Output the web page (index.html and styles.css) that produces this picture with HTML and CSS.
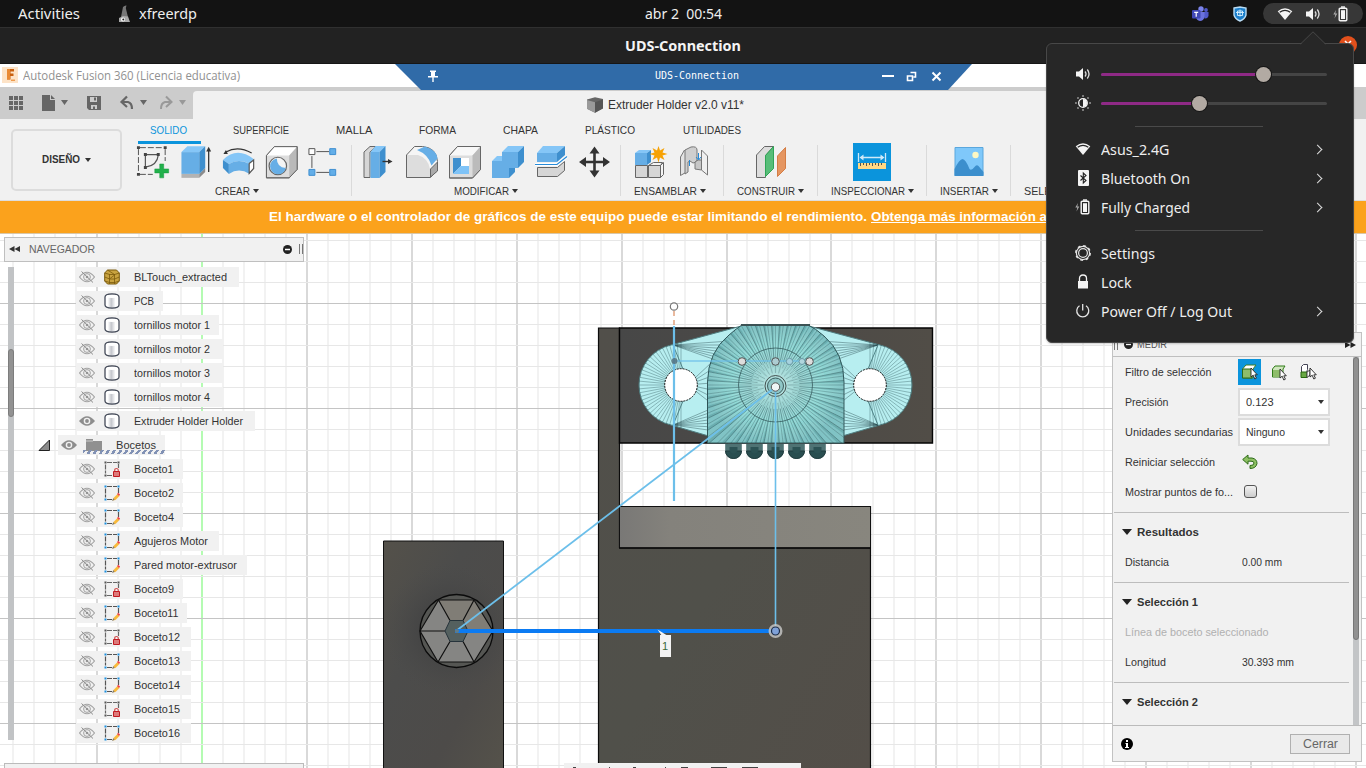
FILE: index.html
```html
<!DOCTYPE html>
<html lang="es">
<head>
<meta charset="utf-8">
<title>UDS-Connection</title>
<link rel="stylesheet" href="styles.css">
</head>
<body>
<svg class="defs" aria-hidden="true">
  <defs>
    <symbol id="wifi" viewBox="0 0 16 16"><path d="M.7 5.200Q8-.800 15.300 5.200L8 14z" fill="#f4f4f4"/><path d="M2.700 6.200Q8 2.400 13.300 6.200" fill="none" stroke="#272727" stroke-width="1.200"/></symbol>
    <symbol id="vol" viewBox="0 0 16 16"><path d="M1 5.500h3L8 2v12L4 10.500H1z" fill="#f4f4f4"/><path d="M10 5.500q2 2.500 0 5M12.300 3.500q3.500 4.500 0 9" fill="none" stroke="#ddd" stroke-width="1.300"/></symbol>
    <symbol id="batt" viewBox="0 0 16 16"><path d="M3 4L.300 8.500h2L1.500 12.500 4.300 7.500h-2z" fill="#aaa"/><path d="M8 .300h4v1.500H8z" fill="#f4f4f4"/><rect x="6.200" y="2.200" width="7.600" height="12.600" rx="1" fill="none" stroke="#f4f4f4" stroke-width="1.400"/><rect x="8" y="4.200" width="4" height="8.800" fill="#f4f4f4"/></symbol>
    <symbol id="eye" viewBox="0 0 16 12"><path d="M0 6Q8-3.500 16 6 8 15.500 0 6z" fill="#8d8d8d"/><circle cx="8" cy="6" r="3.300" fill="#f1f1f1"/><circle cx="8" cy="6" r="1.900" fill="#8d8d8d"/></symbol>
    <symbol id="eyeoff" viewBox="0 0 16 12"><path d="M.5 6Q8-3.500 15.500 6 8 15.500.5 6z" fill="none" stroke="#a2a2a2" stroke-width="1.200"/><circle cx="8" cy="6" r="3.400" fill="none" stroke="#a2a2a2"/><circle cx="8" cy="6" r="1.300" fill="#999"/><path d="M2.500.500l11.500 11" stroke="#8e8e8e"/></symbol>
    <linearGradient id="cyl"><stop offset=".2" stop-color="#fff"/><stop offset=".45" stop-color="#c4c6cc"/><stop offset=".75" stop-color="#fff"/></linearGradient>
    <symbol id="body" viewBox="0 0 16 16"><path d="M1 4Q1 1 8 .800 15 1 15 4V12Q15 15 8 15.200 1 15 1 12z" fill="url(#cyl)" stroke="#454b59" stroke-width="1.300"/><path d="M2 3.800Q2 2 8 1.800 14 2 14 3.800 12 5 8 5 4 5 2 3.800z" fill="#fff"/></symbol>
    <symbol id="mesh" viewBox="0 0 16 16"><path d="M.700 4L3.500 1h9l2.800 3v8l-2.800 3h-9L.700 12z" fill="#c9a340" stroke="#7b5b0d"/><path d="M.700 4l5 1.500h5L15.300 4M.700 8l5 2h5l4.600-2M.700 12l5 1.500h5l4.600-1.500M5.500 5v10M10.500 5v10M3.500 1l7 4.500M5.500 10l5-4" fill="none" stroke="#7b5b0d" stroke-width=".8"/></symbol>
    <symbol id="skpen" viewBox="0 0 16 16"><path d="M3 1.500h10M1.500 3.500v9M14.500 3v5M3 14.500h5" fill="none" stroke="#555" stroke-width="1.200" stroke-dasharray="5 1"/><path d="M.500.500h2v2h-2zM13.500.500h2v2h-2zM.500 13.500h2v2h-2z" fill="#1a8fe0"/><path d="M8.500 15.500l1-2.500 4-4 2 2-4 4z" fill="#f8ba3c"/><path d="M13 9l1.200-1.200L16.200 9.600 15 11z" fill="#f0434a"/><path d="M8 16l1.200-2.800 1.500 1.500z" fill="#777"/></symbol>
    <symbol id="sklock" viewBox="0 0 16 16"><path d="M3 1.500h10M1.500 3.500v9M14.500 3v4M3 14.500h5" fill="none" stroke="#666" stroke-width="1.200" stroke-dasharray="5 1"/><path d="M.500.500h2v2h-2zM13.500.500h2v2h-2zM.500 13.500h2v2h-2z" fill="#555"/><path d="M10.700 11V9.500q0-2 1.800-2t1.800 2V11" fill="none" stroke="#d05050" stroke-width="1.200"/><path d="M9.500 10.500h6v5h-6z" fill="#dd7a7a" stroke="#c11a22"/></symbol>
    <symbol id="cursor" viewBox="0 0 8 13"><path d="M1 1v9l2.200-1.800 1.600 3.800 1.600-.8L4.800 7.800h2.500z" fill="#fff" stroke="#222" stroke-width=".9"/></symbol>
  </defs>
</svg>

<header class="topbar">
  <span class="activities fit" data-w="62">Activities</span>
  <svg class="appicon" width="14" height="18" viewBox="0 0 14 18"><path d="M5 2q2-2 3.500-1.500Q7 3 8.500 6l1.500 6H3l1-5z" fill="#777"/><path d="M1 13l4-2 5 .500 2 5.500H1z" fill="#a9a9a9"/><circle cx="5" cy="14.500" r="2" fill="#fff"/><circle cx="5.300" cy="14.500" r="1" fill="#222"/></svg>
  <span class="appname fit" data-w="58">xfreerdp</span>
  <span class="clock fit" data-w="77">abr 2&nbsp; 00:54</span>
  <div class="tray">
    <svg width="17" height="16" viewBox="0 0 17 16"><circle cx="9" cy="3" r="2.700" fill="#7b83eb"/><circle cx="14" cy="4" r="1.900" fill="#5059c9"/><path d="M11 6h5.500v4q-1 3-4 2.500z" fill="#5059c9"/><path d="M4 6h8.500v5q-1 4-4.500 4-3.500-.5-4-4z" fill="#6a72dd"/><rect y="4" width="8.500" height="8.500" rx="1" fill="#4048b5"/><path d="M2.200 6.300h4M4.200 6.300v4.500" stroke="#fff" stroke-width="1.200"/></svg>
    <svg width="14" height="16" viewBox="0 0 14 16"><path d="M1 2l6-1 6 1v7q-1 4-6 6-5-2-6-6z" fill="#1c7fcb" stroke="#b9dcf4" stroke-width="1.400"/><path d="M4.500 5h5v4.500h-5zM3 6.500h8M7 3.500v7" fill="none" stroke="#d8f0ff" stroke-width=".9"/></svg>
    <div class="pill"><svg width="16" height="16"><use href="#wifi"/></svg><svg width="16" height="16"><use href="#vol"/></svg><svg width="16" height="16"><use href="#batt"/></svg></div>
  </div>
</header>

<div class="wintitle"><span class="fit" data-w="116">UDS-Connection</span>
  <svg class="winclose" width="18" height="18" viewBox="0 0 18 18"><circle cx="9" cy="9" r="9" fill="#e2501c"/><path d="M6 5l6 6M12 5l-6 6" stroke="#fff" stroke-width="1.600"/></svg>
</div>

<div class="apptitle">
  <svg width="16" height="16" viewBox="0 0 16 16"><rect width="16" height="16" fill="#fde3c7"/><path d="M5 2h7v2.500H8.500v2h3v2.500h-3v3.500H5z" fill="#c9600f"/><path d="M5 2h3v10.500H5z" fill="#e98a35"/><path d="M9 12.500h4V14H9z" fill="#ef9c4e"/></svg>
  <span class="fit" data-w="217">Autodesk Fusion 360 (Licencia educativa)</span>
  <div class="rdpbar">
    <svg class="pin" width="12" height="12" viewBox="0 0 12 12"><path d="M3 .500h6v1.500H8V6h3v1.500H6.700V12H5.300V7.500H1V6h3V2H3z" fill="#fff"/></svg>
    <span class="rdpname fit" data-w="84">UDS-Connection</span>
    <svg class="rdpctl" width="60" height="12" viewBox="882 70 60 12"><path d="M882 76h12" stroke="#fff" stroke-width="2"/><path d="M910.500 72.500h5v4.500h-2M907.500 76h5v4.500h-5z" fill="none" stroke="#fff" stroke-width="1.600"/><path d="M932.500 72.500l8 8M940.500 72.500l-8 8" stroke="#fff" stroke-width="2"/></svg>
  </div>
</div>

<div class="quick">
  <svg width="193" height="32" viewBox="0 87 193 32"><g fill="#666"><path d="M9 96h4v4H9zM14 96h4v4h-4zM19 96h4v4h-4zM9 101h4v4H9zM14 101h4v4h-4zM19 101h4v4h-4zM9 106h4v4H9zM14 106h4v4h-4zM19 106h4v4h-4z"/><path d="M42 95h8v5h5v11H42zM51 95l4 4h-4z"/><path d="M61 100h7l-3.500 5zM140 100h7l-3.500 5z"/><path d="M87 96h14v14H89l-2-2z"/></g><path d="M90 97h7v5h-7zM91 105h6v4h-6z" fill="#ccc"/><path d="M94 97.500h2v3h-2zM93 106.500h2v3h-2z" fill="#666"/><path d="M122 102h6q4 1 4 7" fill="none" stroke="#666" stroke-width="2.200"/><path d="M127 96.500l-5.500 5.500 5.500 5" fill="none" stroke="#666" stroke-width="2.200"/><path d="M171 102h-6q-4 1-4 7" fill="none" stroke="#999" stroke-width="2"/><path d="M166 96.500l5.500 5.500-5.500 5" fill="none" stroke="#999" stroke-width="2"/><path d="M179 100h7l-3.500 5z" fill="#999"/></svg>
  <div class="doctab"><svg width="16" height="16" viewBox="0 0 16 16"><path d="M0 2.500L8 .300l8 1.700v9l-8 4.700-8-4z" fill="#666"/><path d="M0 3l8 2.200v10.500l-8-4z" fill="#9a9a9a"/><path d="M8 5.200L16 2.500v9l-8 4.200z" fill="#555"/></svg><span class="fit" data-w="136">Extruder Holder v2.0 v11*</span></div>
</div>

<div class="ribbon">
  <button class="workspace"><span class="fit" data-w="38">DISEÑO</span><i class="caret"></i></button>
  <div class="ribbody">
    <nav class="tabs">
      <span class="on"><b class="fit" data-w="37">SOLIDO</b></span><span class="fit" data-w="56">SUPERFICIE</span><span class="fit" data-w="36.5">MALLA</span><span class="fit" data-w="37">FORMA</span><span class="fit" data-w="35">CHAPA</span><span class="fit" data-w="50">PLÁSTICO</span><span class="fit" data-w="58">UTILIDADES</span>
    </nav>
    <div class="groups">
      <section class="g-create">
        <div class="icons">
          <svg viewBox="132 143 43 38"><path d="M140 147.500h24M138.500 149v24M165.500 149v12M140 174.500h13" fill="none" stroke="#555" stroke-dasharray="6 2"/><path d="M145.500 167.500v-13h13M158.500 155q-1 10-12 12" fill="none" stroke="#555" stroke-width="1.200"/><path d="M137 146h3v3h-3zM164 146h3v3h-3zM137 173h3v3h-3zM144 153h3v3h-3zM157 153h3v3h-3zM144 166h3v3h-3z" fill="#444"/><path d="M160 164h4v5h5v4h-5v5h-4v-5h-5v-4h5z" fill="#22b14c" stroke="#159a3c" stroke-width=".5"/></svg>
          <svg viewBox="174.500 143 43 38"><path d="M181 174h18v4h-18z" fill="#b3b3b3"/><path d="M199 174l6-6v4l-6 6z" fill="#8c8c8c"/><path d="M181 152h18v22h-18z" fill="#66aee6"/><path d="M181 152l6-6h18l-6 6z" fill="#85c6f7"/><path d="M199 152l6-6v22l-6 6z" fill="#3e8fce"/><path d="M208.500 172v-23" stroke="#333" stroke-width="1.300"/><path d="M208.500 146.500l2.500 5h-5z" fill="#333"/></svg>
          <svg viewBox="217 143 43 38"><path d="M226 152q12-7 26 1" fill="none" stroke="#333" stroke-width="1.200"/><path d="M223.500 154l2.500-4 2 4z" fill="#333"/><path d="M223 160q14-14 31-1l-4 5q-10-6-21 0z" fill="#85c6f7"/><path d="M223 160l6 4v10l-6-6z" fill="#3e8fce"/><path d="M229 164q10-6 21 0v10q-11-7-21 0z" fill="#66aee6"/><path d="M249.500 163.500l4.500-3.500v8.500l-4.500 5z" fill="#fff" stroke="#555" stroke-width="1.200"/></svg>
          <svg viewBox="260 143 43 38"><path d="M266.500 155.500l8-9h23v23l-8 8.500h-23z" fill="#ddd" stroke="#666"/><path d="M266.500 155.500l8-9h23l-8 9z" fill="#fff"/><path d="M289.500 155.500l8-9v23l-8 8.500z" fill="#b9b9b9"/><path d="M266.500 155.500l8-9h23v23l-8 8.500h-23z" fill="none" stroke="#666"/><circle cx="278" cy="166" r="8.800" fill="#f4f4f4" stroke="#666" stroke-width="1.200"/><path d="M277 158.500q0 9 9 9.500a8 8 0 1 1-9-9.500z" fill="#66aee6"/></svg>
          <svg viewBox="302.500 143 43 38"><path d="M317 151.500h13M312.500 156v12M317 172.500h13" stroke="#555"/><path d="M309.500 148.500h6v6h-6z" fill="#fff" stroke="#555"/><path d="M330.500 148.500h6v6h-6zM309.500 169.500h6v6h-6zM330.500 169.500h6v6h-6z" fill="#63aee8" stroke="#3f8fd0"/></svg>
        </div><h2 class="nudge"><span class="fit" data-w="35">CREAR</span><i class="caret"></i></h2>
      </section>
      <section class="g-modify">
        <div class="icons">
          <svg viewBox="358.500 143 43 38"><path d="M364.500 152l6-5.500h6l-6 5.500v25.500h-6z" fill="#d6d6d6" stroke="#666"/><path d="M371 152h9v26h-9z" fill="#66aee6"/><path d="M371 152l5-6h10l-6 6z" fill="#85c6f7"/><path d="M380 152l6-6v26l-6 6z" fill="#3e8fce"/><path d="M383 161.500h7" stroke="#333" stroke-width="1.400"/><path d="M388.500 159l4.500 2.500-4.500 2.500z" fill="#333"/></svg>
          <svg viewBox="401 143 43 38"><path d="M406.500 155l8-8.500h8q14 1 15 15v9l-7 7h-24z" fill="#f5f5f5" stroke="#666"/><path d="M407 155h11q10 3 12 14v8h-23z" fill="#ddd"/><path d="M430.500 169l7-7v9l-7 6z" fill="#aaa" stroke="#666"/><path d="M417 150l8-3.500q12 4 12.500 12l-6 7q-3-11-14.500-15.500z" fill="#66aee6"/></svg>
          <svg viewBox="444 143 43 38"><path d="M449.500 155.500l8-9h23v23l-8 8.500h-23z" fill="#ddd" stroke="#666"/><path d="M449.500 155.500l8-9h23l-8 9z" fill="#f8f8f8"/><path d="M472.500 155.500l8-9v23l-8 8.500z" fill="#bbb"/><path d="M449.500 155.500l8-9h23v23l-8 8.500h-23z" fill="none" stroke="#666"/><path d="M453 158h16v16h-16z" fill="#fff"/><path d="M453 158h8v8l-8 8z" fill="#3e8fce"/><path d="M453 174l8-8h8v8z" fill="#7fc3f7"/></svg>
          <svg viewBox="487 143 43 38"><path d="M502 152h16v16h-9v10h-17v-17h10z" fill="#66aee6"/><path d="M502 152l6-6h16l-6 6zM492 161l5-5h5v5z" fill="#85c6f7"/><path d="M518 152l6-6v16l-6 6h-3v4l-6 6v-10h9z" fill="#3e8fce"/></svg>
          <svg viewBox="530 143 43 38"><path d="M537 153h20v9h-20z" fill="#66aee6"/><path d="M537 153l6-7h22l-8 7z" fill="#85c6f7"/><path d="M557 153l8-7v9l-8 7z" fill="#3e8fce"/><path d="M537.500 167.500h20l7-6v9l-7 6h-20z" fill="#d6d6d6" stroke="#666"/><path d="M535 164.500h22l10-8" fill="none" stroke="#fff" stroke-width="3"/><path d="M535 164.500h22l10-8" fill="none" stroke="#278bd8" stroke-width="1.200"/></svg>
          <svg viewBox="572.500 143 43 38"><path d="M594 151v22M583 162h22" stroke="#333" stroke-width="2.600"/><path d="M594 146.500l5 7h-10zM594 177.500l5-7h-10zM578.500 162l7-5v10zM609.500 162l-7-5v10z" fill="#333"/></svg>
        </div><h2><span class="fit" data-w="55">MODIFICAR</span><i class="caret"></i></h2>
      </section>
      <section class="g-assemble">
        <div class="icons">
          <svg viewBox="630 143 43 38"><path d="M635.500 165.500h12v12h-12zM648.500 165.500h12v12h-12z" fill="#d6d6d6" stroke="#666"/><path d="M648.500 165.500l5-3h9l-2 3zM660.500 165.500l3-3v12l-3 3z" fill="#f5f5f5" stroke="#666"/><path d="M635 153h12v12h-12z" fill="#66aee6"/><path d="M635 153l4-3h12l-4 3z" fill="#85c6f7"/><path d="M647 153l4-3v12l-4 3z" fill="#3e8fce"/><path d="M658.500 146l1.500 4.500 4.500-2.500-2 4.500 5 1.500-5 1.500 2 4.500-4.500-2.500-1.500 5-1.500-5-4.500 2.500 2-4.500-5-1.500 5-1.500-2-4.500 4.500 2.500z" fill="#f7a204"/></svg>
          <svg viewBox="673 143 43 38"><path d="M680.500 157l4-7 2 2v20l-6 3.500z" fill="#e4e4e4" stroke="#777"/><path d="M685 150l6-3q6-1 6 3v10q-1 3-4 3l-3-2-2 1v10l-3 2z" fill="#cfcfcf" stroke="#777"/><path d="M701.500 150l6 6v19l-6-5z" fill="#f0f0f0" stroke="#777"/><path d="M695 162q3-3 6.500-2v10l-6.500-1z" fill="#c6c6c6" stroke="#777"/><path d="M689.500 160v6M698.500 153v6" stroke="#278bd8"/><path d="M696 157l2.500 3 2.500-3" fill="none" stroke="#278bd8"/></svg>
        </div><h2><span class="fit" data-w="63">ENSAMBLAR</span><i class="caret"></i></h2>
      </section>
      <section class="g-construct"><div class="icons"><svg viewBox="750 143 43 38"><path d="M756.500 155l8-8.500h9l-8 9v22h-9z" fill="#ddd" stroke="#666"/><path d="M765.500 155.500l8-9v22l-8 8z" fill="#57bd78" stroke="#2fa556"/><path d="M777.500 156l8-8.500v21l-8 8z" fill="#e59661" stroke="#d47d45"/></svg></div><h2 class="nudge"><span class="fit" data-w="58">CONSTRUIR</span><i class="caret"></i></h2></section>
      <section class="g-inspect"><div class="icons"><svg viewBox="851 143 43 38"><path d="M853 143h38v38h-38z" fill="#0b94dc"/><path d="M858.500 153v9M885.500 153v9M861 157.500h22" stroke="#cfe9f8" stroke-width="1.300"/><path d="M859.500 157.500l4-3v6zM884.500 157.500l-4-3v6z" fill="#cfe9f8"/><path d="M858 163h28v6h-28z" fill="#ffd884"/><path d="M860.500 163v3M863.500 163v2M866.500 163v3M869.500 163v2M872.500 163v3M875.500 163v2M878.500 163v3M881.500 163v2" stroke="#555"/></svg></div><h2 class="nudge"><span class="fit" data-w="74">INSPECCIONAR</span><i class="caret"></i></h2></section>
      <section class="g-insert"><div class="icons"><svg viewBox="947.500 143 43 38"><path d="M954.500 147.500h28v28h-28z" fill="#7fc8fa" stroke="#5aa7dd"/><circle cx="975" cy="155" r="3.200" fill="#fdf8c4"/><path d="M954 169q5-10 8-10t7 10q2 2 5-2 2-3 4-1l5 6v4h-29z" fill="#3c8fcd"/></svg></div><h2 class="nudge"><span class="fit" data-w="49">INSERTAR</span><i class="caret"></i></h2></section>
      <section class="g-select"><h2><span class="fit" data-w="77">SELECCIONAR</span></h2></section>
    </div>
  </div>
</div>

<div class="banner"><span class="fit" data-w="598">El hardware o el controlador de gráficos de este equipo puede estar limitando el rendimiento.</span><a class="fit" data-w="176">Obtenga más información a</a></div>

<main class="canvas">
  <svg class="scene" viewBox="0 234 1366 534">
    <defs>
      <linearGradient id="d1" x1="0" y1="0" x2="1" y2="1"><stop offset="0" stop-color="#54514a"/><stop offset=".35" stop-color="#4c4c4b"/><stop offset=".7" stop-color="#4d4b49"/><stop offset="1" stop-color="#55524a"/></linearGradient>
      <radialGradient id="d2"><stop offset=".4" stop-color="#444"/><stop offset="1" stop-color="#4b4b4a" stop-opacity="0"/></radialGradient>
      <linearGradient id="d3" x1="0" y1="0" x2="1" y2="1"><stop offset="0" stop-color="#514f4a"/><stop offset=".5" stop-color="#50504a"/><stop offset="1" stop-color="#534e48"/></linearGradient>
      <linearGradient id="d4"><stop offset="0" stop-color="#474747"/><stop offset="1" stop-color="#514d47"/></linearGradient>
      <linearGradient id="d5"><stop offset="0" stop-color="#797876"/><stop offset=".2" stop-color="#84827c"/><stop offset="1" stop-color="#88867e"/></linearGradient>
      <radialGradient id="teal" cx=".5" cy=".5"><stop offset="0" stop-color="#b5dfdd"/><stop offset=".65" stop-color="#98dcd9"/><stop offset="1" stop-color="#84c4c5"/></radialGradient>
      <clipPath id="bodyclip"><path id="bodyshape" d="M707.500 443V382Q708 352 729 335 737 328 742 325H808Q815 328 824 336 844 353 844 382V443z"/></clipPath>
      <clipPath id="earclip"><path id="ears" d="M745 325L671 345A41 41 0 0 0 671 425L707 435.500H844L880 425A41 41 0 0 0 880 345L805 325z"/></clipPath>
    </defs>
    <g id="grid"></g>
    <path d="M383.500 541h120v230h-120z" fill="url(#d1)" stroke="#111"/>
    <circle cx="450" cy="630" r="67" fill="url(#d2)" clip-path="inset(0 14px 0 0)"/>
    <circle cx="456.500" cy="631" r="36.500" fill="#555653" stroke="#0b0b0b" stroke-width="1.300"/>
    <path d="M420 631l18.500-31H474l19 31-19 31h-36z" fill="#858583"/>
    <path d="M438.500 600H474l-11 20.500h-13zM474 600l19 31h-25l-5-10.500z" fill="#807d76"/>
    <path d="M420 631l18.500-31H474l19 31-19 31h-36zM420 631h25M493 631h-25M438.500 600l11.500 20.500M474 600l-11 20.500M474 662l-11-20.500M438 662l12-20.500" fill="none" stroke="#101010" stroke-width="1.200"/>
    <path d="M445 631l5-10.500h13l5 10.500-5 10.500h-13z" fill="#54605f" stroke="#26333b"/>
    <path d="M598.500 328h21v178h251.500v265h-272.500z" fill="url(#d3)"/>
    <path d="M598.500 771V328h21v220M870.500 506v265" fill="none" stroke="#0c0c0c" stroke-width="1.200"/>
    <path d="M619.500 328H932.500V443H619.500z" fill="url(#d4)" stroke="#050505" stroke-width="1.400"/>
    <path d="M619.500 506.500h251v41.500h-251z" fill="url(#d5)" stroke="#111"/>
    <path d="M619 548h252" stroke="#0a0a0a" stroke-width="1.500"/>
    <use href="#ears" fill="#b7eef0" stroke="#4f7d80"/>
    <g id="earfan" clip-path="url(#earclip)"></g>
    <use href="#bodyshape" fill="url(#teal)" stroke="#34595c"/>
    <g id="bodyfan" clip-path="url(#bodyclip)"></g>
    <path d="M741 325h69" stroke="#3c5254" stroke-width="2"/>
    <g fill="none" stroke="#315558" stroke-opacity=".75"><circle cx="775.500" cy="385" r="37"/><circle cx="775.500" cy="386" r="10.500" stroke="#222"/></g>
    <circle cx="775.500" cy="386" r="8" fill="#8fc6c6" stroke="#3d5d5e"/>
    <circle cx="681" cy="385" r="16.300" fill="#fff" stroke="#111" stroke-dasharray="2 1"/><circle cx="870" cy="385" r="16.300" fill="#fff" stroke="#111" stroke-dasharray="2 1"/>
    <path d="M855 387.500h30" stroke="#e6e6e6"/>
    <g id="pins"></g>
    <g fill="none" stroke="#6cbfea"><path d="M674 326v175" stroke-width="2.200"/><path d="M674 361h136" stroke-width="1.600" opacity=".8"/><path d="M456 631L775.500 387" stroke-width="1.800"/><path d="M775.500 390V631" stroke-width="1.600"/></g>
    <path d="M674 311v5M674 320v5" stroke="#e2a27f" stroke-width="1.500"/><circle cx="674" cy="306.500" r="3.700" fill="#fff" stroke="#777" stroke-width="1.200"/>
    <circle cx="674.500" cy="361" r="3" fill="#536b78" opacity=".8"/>
    <g fill="#ddd" stroke="#555"><circle cx="742" cy="361.500" r="3.800"/><circle cx="775.500" cy="361.500" r="3.800" fill="#adcdd2"/><circle cx="789.500" cy="361.500" r="3.200" fill="#a6d2df" stroke="#6b9aa5"/><circle cx="802" cy="361.500" r="3" fill="#b0d6de" stroke="#6b9aa5"/><circle cx="809.500" cy="361.500" r="3.800"/><circle cx="775.500" cy="387" r="4.200" fill="#eef5f6"/></g>
    <path d="M455 631H775" stroke="#0b7bf3" stroke-width="4"/><circle cx="457" cy="631" r="2" fill="#627b86"/>
    <circle cx="775.500" cy="631" r="7" fill="#c9c9c9" opacity=".8"/><circle cx="775.500" cy="631" r="4" fill="#7fa1d8" stroke="#1b2c48" stroke-width="1.200"/>
    <path d="M657.500 629.500L668 636h-6z" fill="#f3f3f3"/><path d="M660 635h11v22h-11z" fill="#f3f3f3"/>
    <text class="tag" x="662" y="650">1</text>
  </svg>

  <aside class="navigator">
    <div class="navhead"><svg width="12" height="8" viewBox="0 0 12 8"><path d="M5.500 1v6L0 4zM11 1v6L5.500 4z" fill="#333"/></svg><span class="fit" data-w="66">NAVEGADOR</span><svg class="navmin" width="16" height="11" viewBox="0 0 16 11"><circle cx="4.500" cy="5.500" r="4.500" fill="#222"/><path d="M2 5.500h5" stroke="#fff" stroke-width="1.500"/></svg><i class="grip"></i></div>
    <div class="navbody"><div class="track"><i></i></div><ul id="tree"></ul></div>
    <div class="navfoot"></div>
  </aside>

  <div class="viewbar"><svg width="237" height="5" viewBox="564 763 237 5"><path d="M573 767.500h3M609 767.500h1M633 767.500h3M665 767.500h1M681 767.500h7M711 767.500h16M742 767.500h16" stroke="#444"/></svg></div>

  <section class="measure">
    <div class="mhead"><i class="grip"></i><svg width="9" height="9" viewBox="0 0 9 9"><circle cx="4.500" cy="4.500" r="4.500" fill="#222"/><path d="M2 4.500h5" stroke="#fff" stroke-width="1.300"/></svg><span class="fit" data-w="30">MEDIR</span><svg class="ff" width="12" height="8" viewBox="0 0 12 8"><path d="M0 1v6l5.500-3zM5.500 1v6L11 4z" fill="#222"/></svg></div>
    <div class="mbody">
      <div class="mlist">
        <div class="mrow"><label><span class="fit" data-w="86.5">Filtro de selección</span></label><div class="filters">
          <b class="sel"><svg width="18" height="18" viewBox="0 0 18 18"><path d="M1.500 6L5 2h10l-3 4v9H1.500z" fill="#fff" stroke="#3f7e26"/><path d="M1.500 6h9.500v9H1.500z" fill="#8ebd6a" stroke="#2e6b17"/><use href="#cursor" x="9" y="4" width="8" height="13"/></svg></b>
          <b><svg width="18" height="18" viewBox="0 0 18 18"><path d="M2.500 6L5 3h10l-2 3v7l-3 1H2.500z" fill="#cfe6bd" stroke="#2e7b17"/><path d="M3 7h8v7H3z" fill="#8ebd6a"/><use href="#cursor" x="9" y="5" width="8" height="13"/></svg></b>
          <b><svg width="18" height="18" viewBox="0 0 18 18"><path d="M2.500 3.500l2-2h4v5l-1 3h-5z" fill="#fff" stroke="#445"/><path d="M2 9h6v5.500H2z" fill="#6aa845" stroke="#27670f"/><path d="M8 9l3-2v5l-3 2.500z" fill="#fff" stroke="#444"/><use href="#cursor" x="10" y="4" width="8" height="13"/></svg></b></div></div>
        <div class="mrow"><label><span class="fit" data-w="43.5">Precisión</span></label><div class="select"><span class="fit" data-w="27.5">0.123</span><i class="caret"></i></div></div>
        <div class="mrow"><label><span class="fit" data-w="108">Unidades secundarias</span></label><div class="select"><span class="fit" data-w="39">Ninguno</span><i class="caret"></i></div></div>
        <div class="mrow"><label><span class="fit" data-w="90">Reiniciar selección</span></label><svg class="undo" width="16" height="16" viewBox="0 0 16 16"><path d="M.7 5.500L6 1v3h4q5 1 5 5.500-1 5-7 5v-3q4 .3 4-2.500 0-1.800-3-1.800H6v3z" fill="#8dc063" stroke="#2c6a17"/></svg></div>
        <div class="mrow"><label><span class="fit" data-w="108">Mostrar puntos de fo...</span></label><i class="check"></i></div>
        <div class="mrow mh"><i class="tri"></i><span class="fit" data-w="62">Resultados</span></div>
        <div class="mrow"><label><span class="fit" data-w="44">Distancia</span></label><span class="val fit" data-w="40">0.00 mm</span></div>
        <div class="mrow mh"><i class="tri"></i><span class="fit" data-w="61">Selección 1</span></div>
        <div class="mrow dim"><span class="fit" data-w="143.5">Línea de boceto seleccionado</span></div>
        <div class="mrow"><label><span class="fit" data-w="41">Longitud</span></label><span class="val fit" data-w="52">30.393 mm</span></div>
        <div class="mrow mh"><i class="tri"></i><span class="fit" data-w="61">Selección 2</span></div>
      </div>
      <div class="mtrack"><i></i></div>
    </div>
    <div class="mfoot"><svg width="12" height="12" viewBox="0 0 12 12"><circle cx="6" cy="6" r="6" fill="#000"/><path d="M5 2h2v2H5zM4.500 5H7v4h1v1H4V9h1V6h-.5z" fill="#fff"/></svg><button><span class="fit" data-w="35">Cerrar</span></button></div>
  </section>
</main>

<div class="sysmenu">
  <svg class="arrow" width="26" height="14" viewBox="0 0 26 14"><path d="M0 14L13 1l13 13z" fill="#272727"/><path d="M.5 13L13 .800 25.500 13" fill="none" stroke="#484848"/></svg>
  <div class="srow"><svg width="16" height="16"><use href="#vol"/></svg><div class="slider"><i style="width:162px"></i></div></div>
  <div class="srow"><svg width="16" height="16" viewBox="0 0 16 16"><circle cx="8" cy="8" r="4.300" fill="none" stroke="#f4f4f4" stroke-width="1.300"/><path d="M8 4v8a4 4 0 0 0 0-8z" fill="#f4f4f4"/><path d="M8 .200v1.500M8 14.300v1.500M.2 8h1.500M14.300 8h1.500M2.500 2.500l1 1M12.500 12.500l1 1M2.500 13.500l1-1M12.500 3.500l1-1" stroke="#bbb" stroke-width="1.500"/></svg><div class="slider"><i style="width:98px"></i></div></div>
  <hr>
  <div class="item"><svg width="16" height="16"><use href="#wifi"/></svg><span class="fit" data-w="68.5">Asus_2.4G</span><i class="chev"></i></div>
  <div class="item"><svg width="16" height="16" viewBox="0 0 16 16"><rect x="3" width="11" height="16" rx="1" fill="#f4f4f4"/><path d="M5.500 5.500l5.500 5L8.300 13V3L11 5.500l-5.500 5" fill="none" stroke="#222" stroke-width="1.100"/></svg><span class="fit" data-w="89">Bluetooth On</span><i class="chev"></i></div>
  <div class="item"><svg width="16" height="16"><use href="#batt"/></svg><span class="fit" data-w="89">Fully Charged</span><i class="chev"></i></div>
  <hr>
  <div class="item"><svg width="16" height="16" viewBox="0 0 16 16"><circle cx="8" cy="8" r="6.600" fill="none" stroke="#e4e4e4" stroke-width="1.200"/><circle cx="8" cy="8" r="7.200" fill="none" stroke="#e4e4e4" stroke-width="1.500" stroke-dasharray="2.800 2.850"/><circle cx="8" cy="8" r="4.400" fill="none" stroke="#e4e4e4" stroke-width="1.200"/></svg><span class="fit" data-w="54">Settings</span></div>
  <div class="item"><svg width="16" height="16" viewBox="0 0 16 16"><path d="M3 7h10v7.500H3z" fill="#f4f4f4"/><path d="M4.500 7.500V4.500Q4.500 1 8 1t3.500 3.500v3" fill="none" stroke="#f4f4f4" stroke-width="1.300"/></svg><span class="fit" data-w="30.5">Lock</span></div>
  <div class="item"><svg width="16" height="16" viewBox="0 0 16 16"><path d="M4.500 2.800a6 6 0 1 0 6.500 0M7.700 1V7.500" fill="none" stroke="#e4e4e4" stroke-width="1.300"/></svg><span class="fit" data-w="131">Power Off / Log Out</span><i class="chev"></i></div>
</div>
<script src="main.js"></script>
</body>
</html>
```

FILE: styles.css
```css
* { box-sizing: border-box; }
html, body { margin: 0; width: 1366px; height: 768px; overflow: hidden; }
body { display: flex; flex-direction: column; position: relative; background: #fff; font: 11px/14px "Liberation Sans", sans-serif; color: #333; }
svg { display: block; flex: none; }
i { font-style: normal; display: block; flex: none; }
h2 { margin: 0; font-weight: 400; font-size: 11px; }
button { font: inherit; color: inherit; padding: 0; }
.defs { position: absolute; width: 0; height: 0; }
.fit { display: block; flex: none; white-space: nowrap; font-weight: inherit; }
.fit > span { display: inline-block; transform-origin: 0 50%; }

.topbar { height: 27px; background: #131313; color: #eee; font: 14.500px/27px "Noto Sans", sans-serif; display: flex; align-items: center; padding-left: 18px; flex: none; }
.appicon { margin-left: 38px; }
.appname { margin-left: 7px; }
.clock { margin-left: 448px; }
.topbar .clock { margin-top: -1px; }
.tray { display: flex; align-items: center; margin-left: auto; padding-right: 3px; }
.tray > svg + svg { margin-left: 24px; }
.pill { width: 100px; height: 21px; border-radius: 11px; background: #373737; margin-left: 16px; display: flex; align-items: center; gap: 12px; padding-left: 14px; }

.wintitle { height: 37px; flex: none; background: #222; border-top: 1px solid #303030; border-bottom: 1px solid #161616; color: #f4f4f4; font: bold 14px/36px "Noto Sans", sans-serif; display: flex; padding-left: 625px; }
.winclose { margin: 8px 9px 0 auto; }

.apptitle { height: 23px; flex: none; background: #fff; display: flex; padding-left: 2px; color: #919191; font: 12px/23px "Open Sans", sans-serif; }
.apptitle > svg { margin: 3px 5px 0 0; }
.rdpbar { position: absolute; left: 395px; top: 64px; width: 577px; height: 26px; z-index: 2; background: #306ba8; clip-path: polygon(0 0, 100% 0, 553px 100%, 26px 100%); display: flex; align-items: center; color: #fff; font: 10.500px/22px "DejaVu Sans Mono", monospace; }
.pin { margin: -2px 0 0 32px; }
.rdpname { margin: -4px 0 0 216px; }
.rdpctl { margin: -2px 0 0 143px; }

.quick { height: 32px; flex: none; background: #ccc; display: flex; }
.doctab { width: 1130px; margin-top: 4px; height: 28px; border-radius: 4px 4px 0 0; background: #f1f1f1; display: flex; align-items: center; gap: 5px; padding-left: 394px; font-size: 12px; }

.ribbon { height: 82px; flex: none; background: #f1f1f1; border-bottom: 1px solid #ddd; display: flex; }
.workspace { width: 111px; height: 62px; margin: 10px 0 0 11px; border: 2px solid #dcdcdc; border-radius: 5px; background: #f1f1f1; font-weight: bold; display: flex; align-items: center; padding-left: 29px; gap: 5px; }
.workspace .fit { margin-top: -2px; }
.caret { width: 0; height: 0; border: 3px solid transparent; border-top: 4px solid #333; border-bottom: 0; }
.ribbody { flex: 1; }
.tabs { display: flex; gap: 46.800px; height: 24px; padding: 4px 0 0 28px; }
.tabs > .fit:nth-child(2) { margin-left: -.800px; }
.tabs > .fit:nth-child(n+6) { margin-left: .800px; }
.tabs .on { color: #0b94dc; font-weight: 400; border-bottom: 3px solid #0b94dc; margin: 0 -14px 0 -12px; padding: 0 14px 0 12px; height: 21px; }
.groups { display: flex; height: 57px; }
.groups section { flex: none; display: flex; flex-direction: column; position: relative; }
.groups section + section::before { content: ""; position: absolute; left: 0; top: 2px; width: 1px; height: 51px; background: #dadada; }
.icons { display: flex; justify-content: center; height: 38px; padding-left: 2px; }
.icons svg { width: 43px; height: 38px; }
.groups h2 { display: flex; align-items: center; justify-content: center; gap: 3px; margin-top: 3px; height: 14px; }
.groups .nudge { padding-left: 1px; }
.g-create { width: 229px; } .g-modify { width: 269px; } .g-assemble { width: 103px; }
.g-construct { width: 94px; } .g-inspect { width: 109px; } .g-insert { width: 84px; } .g-select { width: 105px; }
.groups .g-select h2 { margin-top: 41px; }
.g-create .icons { padding-left: 4px; }
.g-create .icons svg { width: 42.600px; }
.groups .g-assemble h2 { padding-right: 3px; }

.banner { height: 33px; flex: none; background: #fba21c; border-bottom: 1px solid #d9c7a8; color: #fff; font: bold 13px/31px "Liberation Sans", sans-serif; display: flex; gap: 4px; padding-left: 269px; overflow: hidden; }
.banner a > span { text-decoration: underline; }

.canvas { flex: 1; position: relative; overflow: hidden; }
.scene { width: 1366px; height: 534px; }
.tag { font: 11px "Liberation Sans", sans-serif; fill: #3a6a3a; }
.navigator { position: absolute; left: 4px; top: 3px; width: 300px; height: 531px; display: flex; flex-direction: column; }
.navhead { height: 25px; flex: none; border: 1px solid #bfbfbf; background: #f1f1f1; display: flex; align-items: center; padding: 0 1px 1px 4px; color: #666; }
.navhead > .fit { margin: -1px 0 0 8px; }
.navmin { margin-left: auto; }
.grip { width: 4px; height: 10px; border: solid #777; border-width: 0 1px; }
.navhead .grip { margin-right: -1px; }
.navbody { display: flex; flex: 1; padding: 5px 0 0 4px; }
.track { width: 6px; height: 473px; background: #c1c3c5; padding-top: 82px; flex: none; }
.track i { height: 68px; border-radius: 3px; background: #929292; border: 1px solid #7d7d7d; }
#tree { margin: 0 0 0 24px; padding: 0; list-style: none; }
#tree li { display: flex; align-items: center; height: 20px; margin-bottom: 4px; }
#tree .cell { display: flex; align-items: center; height: 20px; background: #f1f1f1; margin-left: 38px; padding-left: 3px; }
#tree .ico { margin: 0 14px 0 9px; }
#tree .folder .cell { margin-left: 8px; position: relative; }
#tree .folder .cell::after { content: ""; position: absolute; left: 25px; right: 0; bottom: 1px; height: 4px; background: repeating-linear-gradient(125deg, #8292b5 0 2.400px, transparent 2.400px 5px); }
.navfoot { height: 5px; background: #f1f1f1; border: 1px solid #bbb; border-bottom: 0; }
.viewbar { position: absolute; left: 564px; top: 529px; width: 237px; height: 5px; background: #f1f1f1; }

.measure { position: absolute; left: 1112px; top: 98px; width: 250px; height: 430px; background: #f1f1f1; border: 1px solid #c2c2c2; display: flex; flex-direction: column; }
.mhead { height: 24px; flex: none; border-bottom: 1px solid #bfbfbf; display: flex; align-items: center; color: #555; padding: 0 4px 0 1px; }
.mhead svg { margin: 0 4px 0 6px; }
.mhead > .fit { margin-top: -1px; }
.mhead .ff { margin: 0 0 0 auto; }
.mbody { flex: 1; display: flex; justify-content: space-between; overflow: hidden; }
.mlist { width: 240px; }
.mrow { height: 30px; display: flex; align-items: center; padding-left: 12px; }
.mrow label { width: 113px; flex: none; }
.mrow.mh { height: 35px; border-top: 1px solid #bdbdbd; font-weight: bold; padding: 3px 0 0 9px; margin: 5px 4px 0 1px; }
.tri { border: 5px solid transparent; border-top: 6px solid #222; border-bottom: 0; margin-right: 5px; margin-left: -1px; }
.dim { color: #b0b0b0; }
.val { margin-left: 4px; }
.filters { display: flex; align-items: center; gap: 6px; }
.filters b { width: 23px; height: 26px; display: flex; align-items: center; justify-content: center; }
.filters .sel { background: #0b94dc; }
.select { width: 92px; height: 28px; border: 2px solid #dcdcdc; background: #fff; display: flex; align-items: center; justify-content: space-between; padding: 0 4px 0 6px; }
.undo { margin-left: 4px; }
.check { width: 13px; height: 13px; border: 1px solid #555; border-radius: 3px; background: linear-gradient(#f2f2f2, #ccc); margin: -2px 0 0 6px; }
.mtrack { width: 6px; background: #c3c5c7; margin-right: 2px; }
.mtrack i { height: 283px; background: #919191; border: 1px solid #777; border-radius: 3px; }
.mfoot { height: 36px; flex: none; border-top: 1px solid #bbb; display: flex; align-items: center; justify-content: space-between; padding: 0 11px 0 8px; }
.mfoot button { width: 60px; height: 20px; border: 1px solid #b0b0b0; background: #e9e9e9; color: #666; font-size: 12px; display: flex; align-items: center; justify-content: center; }

.sysmenu { position: absolute; z-index: 5; left: 1046px; top: 43px; width: 308px; height: 300px; background: #272727; border: 1px solid #484848; border-radius: 6px; color: #eee; font: 14.500px/29px "Noto Sans", sans-serif; padding: 16px 26px 0 28px; box-shadow: 0 1px 2px #0003; }
.arrow { position: absolute; left: 253px; top: -13px; }
.srow, .item { display: flex; align-items: center; height: 29px; gap: 10px; }
.srow svg { margin-top: -1px; }
.item svg { margin-top: -1px; }
.slider { width: 226px; height: 3px; border-radius: 2px; background: #454545; }
.slider i { height: 3px; background: #8f2a86; border-radius: 2px; position: relative; }
.slider i::after { content: ""; position: absolute; right: -8px; top: -6px; width: 15px; height: 15px; border-radius: 50%; background: #b2aaa3; box-shadow: 0 0 0 1px #161616; }
hr { border: 0; border-top: 1px solid #4a4a4a; width: 128px; height: 1px; margin: 8px 0 8px 60px; }
.chev { width: 7px; height: 7px; border: solid #ddd; border-width: 1.500px 1.500px 0 0; transform: rotate(45deg); margin: -1px 6px 0 auto; }
```

FILE: main.js
```js
const NS = 'http://www.w3.org/2000/svg';
const add = (id, tag, attrs) => {
  const el = document.createElementNS(NS, tag);
  for (const k in attrs) el.setAttribute(k, attrs[k]);
  document.getElementById(id).appendChild(el);
};

// Drawing grid: one strong line every five
for (let k = -9; k < 56; k++) {
  const x = Math.round(202 + k * 20.98) - 1;
  const major = k % 5 === 0;
  add('grid', 'rect', { x, y: 234, width: 2, height: 534, fill: k === 0 ? '#b4fbb2' : major ? '#d9d9d9' : '#f2f2f2' });
}
for (let k = -4; k < 23; k++) {
  const y = Math.round(303 + k * 21);
  add('grid', 'rect', { x: 0, y, width: 1366, height: 1, fill: k % 5 === 0 ? '#c4c4c4' : '#e7e7e7' });
}

// Facets of the ears and of the central body
const ray = (id, cx, cy, a, r1, r2, o) => add(id, 'line', {
  x1: cx + Math.cos(a) * r1, y1: cy + Math.sin(a) * r1, x2: cx + Math.cos(a) * r2, y2: cy + Math.sin(a) * r2,
  stroke: '#27494d', 'stroke-width': 0.7, opacity: o });
for (let i = 0; i <= 34; i++) {
  const a = Math.PI / 2 + i * Math.PI / 34;
  ray('earfan', 681, 385, a, 16, 44, 0.5);
  ray('earfan', 870, 385, a + Math.PI, 16, 44, 0.5);
}
for (const s of [1, -1]) {
  const X = v => s === 1 ? v : 1551 - v;
  for (let i = 0; i < 7; i++) {
    add('earfan', 'path', { d: `M${X(673)} 345L${X(730)} ${341 + i * 4}M${X(673)} 425L${X(715)} ${431 - i * 4}M${X(696)} ${377 + i * 2.4}L${X(712)} ${362 + i * 7}`, stroke: '#27494d', 'stroke-width': 0.7, fill: 'none', opacity: 0.6 });
  }
  add('earfan', 'path', { d: `M${X(673)} 345L${X(683)} 369M${X(673)} 425L${X(683)} 401`, stroke: '#4f8488', 'stroke-width': 1, fill: 'none' });
}
// Alternate facets are shaded, every facet carries an edge line
for (let i = 0; i < 96; i++) {
  const a = i * Math.PI / 48, b = a + Math.PI / 96;
  if (i % 2) {
    add('bodyfan', 'path', { d: `M${775.5 + Math.cos(a) * 12} ${385 + Math.sin(a) * 12}L${775.5 + Math.cos(a) * 95} ${385 + Math.sin(a) * 95}L${775.5 + Math.cos(b) * 95} ${385 + Math.sin(b) * 95}z`, fill: '#3f7f82', opacity: 0.3 });
  }
  ray('bodyfan', 775.5, 385, a, i % 2 ? 24 : i % 4 ? 18 : 12, 100, i % 2 ? 0.55 : 0.4);
}

// Connector pins under the sensor
for (const x of [733.5, 754.5, 775.5, 796.5, 817.5]) {
  add('pins', 'path', { d: `M${x - 8.3} 444h16.600v7a8.300 8 0 0 1-16.600 0z`, fill: '#4f7374' });
  add('pins', 'path', { d: `M${x - 8} 451h16a8 7.500 0 0 1-16 0z`, fill: '#294e50', stroke: '#223c3e' });
  add('pins', 'path', { d: `M${x - 4} 447h8v4q-4 5-8 0z`, fill: '#2c5254' });
}

// Browser tree: name, text width, row end, icon
const rows = [
  ['BLTouch_extracted', 93, 239, 'mesh'], ['PCB', 20, 163, 'body'],
  ['tornillos motor 1', 76, 219, 'body'], ['tornillos motor 2', 76, 223, 'body'],
  ['tornillos motor 3', 76, 223, 'body'], ['tornillos motor 4', 76, 223, 'body'],
  ['Extruder Holder Holder', 109, 255, 'body', true], ['Bocetos', 40, 165, 'folder', true],
  ['Boceto1', 39.5, 183, 'sklock'], ['Boceto2', 40, 183, 'skpen'], ['Boceto4', 40, 183, 'skpen'],
  ['Agujeros Motor', 74, 219, 'skpen'], ['Pared motor-extrusor', 103, 247, 'skpen'],
  ['Boceto9', 40, 183, 'sklock'], ['Boceto11', 44.5, 187, 'skpen'], ['Boceto12', 46, 191, 'sklock'],
  ['Boceto13', 46, 191, 'skpen'], ['Boceto14', 46, 191, 'skpen'], ['Boceto15', 46, 191, 'sklock'],
  ['Boceto16', 46, 191, 'skpen']
];
document.getElementById('tree').innerHTML = rows.map(([t, w, end, ico, on]) => {
  const f = ico === 'folder';
  const icon = f
    ? '<svg class="ico" width="16" height="14" viewBox="0 0 16 14"><path d="M0 1h7v2h9v10H0z" fill="#909090"/><path d="M0 3h7" stroke="#ccc"/></svg>'
    : `<svg class="ico" width="16" height="16"><use href="#${ico}"/></svg>`;
  return `<li${f ? ' class="folder"' : ''}>${f ? '<svg width="12" height="12" viewBox="0 0 12 12"><path d="M11.500 1v10.500H1z" fill="#8b8b8b" stroke="#222"/></svg>' : ''}<div class="cell" style="width:${end - (f ? 58 : 76)}px"><svg width="16" height="12"><use href="#${on ? 'eye' : 'eyeoff'}"/></svg>${icon}<span class="fit" data-w="${w}">${t}</span></div></li>`;
}).join('');

// Set each label to its measured width
document.querySelectorAll('.fit').forEach(el => {
  const inner = document.createElement('span');
  inner.textContent = el.textContent;
  el.textContent = '';
  el.appendChild(inner);
  const w = +el.dataset.w;
  inner.style.transform = `scaleX(${w / inner.getBoundingClientRect().width})`;
  el.style.width = w + 'px';
});
```
